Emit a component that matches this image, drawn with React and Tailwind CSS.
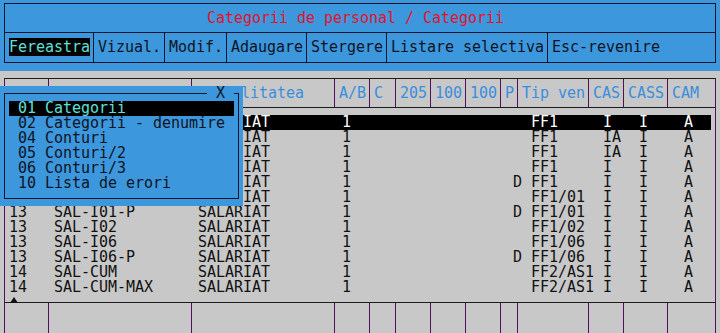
const menu = [
  { label: 'Fereastra', w: 'w-[89px]', active: true },
  { label: 'Vizual.', w: 'w-[71px]' },
  { label: 'Modif.', w: 'w-[62px]' },
  { label: 'Adaugare', w: 'w-[80px]' },
  { label: 'Stergere', w: 'w-[80px]' },
  { label: 'Listare selectiva', w: 'w-[161px]' },
  { label: 'Esc-revenire', w: 'w-[161px]', last: true },
];

// header / footer cells (between the drawn dividers)
const cols = [
  { w: 'w-[44px]', head: '' },
  { w: 'w-[143px]', head: '' },
  { w: 'w-[143px]', head: 'litatea', pad: 'pl-[49px]' },
  { w: 'w-[35px]', head: 'A/B' },
  { w: 'w-[26px]', head: 'C' },
  { w: 'w-[35px]', head: '205' },
  { w: 'w-[35px]', head: '100' },
  { w: 'w-[35px]', head: '100' },
  { w: 'w-[17px]', head: 'P' },
  { w: 'w-[71px]', head: 'Tip ven' },
  { w: 'w-[35px]', head: 'CAS' },
  { w: 'w-[44px]', head: 'CASS' },
  { w: 'w-[35px]', head: 'CAM', last: true },
];

// data cells, starting at the first text column
const dataW = [
  'w-[45px]', 'w-[144px]', 'w-[144px]', 'w-[36px]', 'w-[27px]', 'w-[36px]',
  'w-[36px]', 'w-[36px]', 'w-[18px]', 'w-[72px]', 'w-[36px]', 'w-[45px]', 'w-[27px]',
];

// first six rows sit under the drop-down, only the tail of "SALARIAT" shows
const rows = [
  ['', '', 'IAT', '1', '', '', '', '', '', 'FF1', 'I', 'I', 'A'],
  ['', '', 'IAT', '1', '', '', '', '', '', 'FF1', 'IA', 'I', 'A'],
  ['', '', 'IAT', '1', '', '', '', '', '', 'FF1', 'IA', 'I', 'A'],
  ['', '', 'IAT', '1', '', '', '', '', '', 'FF1', 'I', 'I', 'A'],
  ['', '', 'IAT', '1', '', '', '', '', 'D', 'FF1', 'I', 'I', 'A'],
  ['', '', 'IAT', '1', '', '', '', '', '', 'FF1/01', 'I', 'I', 'A'],
  ['13', 'SAL-I01-P', 'SALARIAT', '1', '', '', '', '', 'D', 'FF1/01', 'I', 'I', 'A'],
  ['13', 'SAL-I02', 'SALARIAT', '1', '', '', '', '', '', 'FF1/02', 'I', 'I', 'A'],
  ['13', 'SAL-I06', 'SALARIAT', '1', '', '', '', '', '', 'FF1/06', 'I', 'I', 'A'],
  ['13', 'SAL-I06-P', 'SALARIAT', '1', '', '', '', '', 'D', 'FF1/06', 'I', 'I', 'A'],
  ['14', 'SAL-CUM', 'SALARIAT', '1', '', '', '', '', '', 'FF2/AS1', 'I', 'I', 'A'],
  ['14', 'SAL-CUM-MAX', 'SALARIAT', '1', '', '', '', '', '', 'FF2/AS1', 'I', 'I', 'A'],
];

const ferestre = [
  '01 Categorii',
  '02 Categorii - denumire',
  '04 Conturi',
  '05 Conturi/2',
  '06 Conturi/3',
  '10 Lista de erori',
];

export default function App() {
  return (
    <div className="relative w-[720px] h-[333px] overflow-hidden bg-[#c8c8c8] font-['DejaVu_Sans_Mono',monospace] text-[15px] leading-[15px] tracking-[-0.03px] whitespace-pre">
      {/* title + menu bar */}
      <div className="h-[71px] bg-[#3c97dc] pt-[3px] pl-[4px]">
        <div className="w-[712px] border border-[#0c1631]">
          <div className="h-[29px] pt-[7px] pl-[202px] border-b border-[#0c1631] text-[#e3122e]">
            Categorii de personal / Categorii
          </div>
          <div className="flex h-[29px]">
            {menu.map((m) => (
              <div
                key={m.label}
                className={`${m.w} pt-[7px] pl-[4px] text-[#0e1424] ${m.last ? '' : 'border-r border-[#0c1631]'}`}
              >
                <span className={m.active ? 'bg-black text-[#5fe0d6]' : ''}>{m.label}</span>
              </div>
            ))}
          </div>
        </div>
      </div>

      {/* table */}
      <div className="pt-[7px] pl-[4px]">
        <div className="w-[712px] border-t border-l border-r border-t-[#1c1c1c] border-x-[#50105a]">
          <div className="flex h-[29px] border-b border-[#1c1c1c]">
            {cols.map((c, i) => (
              <div
                key={i}
                className={`${c.w} pt-[7px] ${c.pad || 'pl-[4px]'} text-[#3a8ede] ${c.last ? '' : 'border-r border-[#50105a]'}`}
              >
                {c.head}
              </div>
            ))}
          </div>

          <div className="relative h-[195px] pt-[7px] border-b border-[#1c1c1c]">
            {rows.map((r, i) => (
              <div
                key={i}
                className={`flex ml-[4px] w-[702px] h-[15px] ${i === 0 ? 'bg-black text-white' : 'text-[#111111]'}`}
              >
                {r.map((v, j) => (
                  <div key={j} className={`${dataW[j]} ${j === 2 && i < 6 ? 'pl-[45px]' : ''}`}>{v}</div>
                ))}
              </div>
            ))}
            <svg className="absolute left-[5px] bottom-[-1px]" width="8" height="6" viewBox="0 0 8 6">
              <polygon points="4,0 8,6 0,6" fill="#111" />
            </svg>
          </div>

          <div className="flex h-[30px]">
            {cols.map((c, i) => (
              <div key={i} className={`${c.w} ${c.last ? '' : 'border-r border-[#50105a]'}`} />
            ))}
          </div>
        </div>
      </div>

      {/* Fereastra drop-down */}
      <div className="absolute left-0 top-[86px] w-[243px] h-[120px] bg-[#3c97dc] pt-[7px]">
        <div className="relative flex h-px ml-[4px]">
          <div className="w-[203px] bg-[#0c1631]" />
          <div className="w-[27px]" />
          <div className="w-[5px] bg-[#0c1631]" />
          <span className="absolute left-[212px] top-[-7px] text-[#0e1424]">X</span>
        </div>
        <div className="ml-[4px] w-[235px] h-[105px] pt-[7px] border-l border-r border-b border-[#0c1631]">
          {ferestre.map((f, i) => (
            <div
              key={f}
              className={`ml-[4px] w-[225px] h-[15px] pl-[9px] ${i === 0 ? 'bg-black text-[#5fe0d6]' : 'text-[#0e1424]'}`}
            >
              {f}
            </div>
          ))}
        </div>
      </div>
    </div>
  );
}
